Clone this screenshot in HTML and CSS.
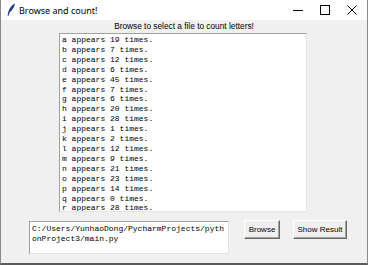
FILE: index.html
```html
<!DOCTYPE html>
<html>
<head>
  <title>Browse and count!</title>
  <link rel="stylesheet" href="styles.css">
</head>
<body>
  <div class="window">
    <div class="titlebar">
      <svg class="app-icon" width="10" height="14" viewBox="0 0 10 14">
        <path d="M8.5 0.5 C6 2 3.5 5 2.2 9 L1.6 12.8 L2.4 13 L3.6 9.6 C6.2 7 8.4 4 8.8 1.2 Z" fill="#1f3b73"/>
      </svg>
      <span class="title">Browse and count!</span>
      <div class="controls">
        <svg width="10" height="10" viewBox="0 0 10 10"><path d="M0 5.5 H10" stroke="#000" stroke-width="1"/></svg>
        <svg width="10" height="10" viewBox="0 0 10 10"><rect x="0.5" y="0.5" width="9" height="9" fill="none" stroke="#000" stroke-width="1"/></svg>
        <svg width="10" height="10" viewBox="0 0 10 10"><path d="M0.5 0.5 L9.5 9.5 M9.5 0.5 L0.5 9.5" stroke="#000" stroke-width="1"/></svg>
      </div>
    </div>

    <div class="content">
      <div class="label">Browse to select a file to count letters!</div>
      <div class="textbox">a appears 19 times.
b appears 7 times.
c appears 12 times.
d appears 6 times.
e appears 45 times.
f appears 7 times.
g appears 6 times.
h appears 20 times.
i appears 28 times.
j appears 1 times.
k appears 2 times.
l appears 12 times.
m appears 9 times.
n appears 21 times.
o appears 23 times.
p appears 14 times.
q appears 0 times.
r appears 28 times.</div>

      <div class="bottom-row">
        <div class="path-box">C:/Users/YunhaoDong/PycharmProjects/pythonProject3/main.py</div>
        <button class="btn btn-browse">Browse</button>
        <button class="btn btn-show">Show Result</button>
      </div>
    </div>
  </div>
</body>
</html>
```

FILE: styles.css
```css
body {
  margin: 0;
  padding: 0;
  font-family: 'Liberation Sans', Arial, sans-serif;
  background: #f0f0f0;
}

.window {
  width: 368px;
  height: 265px;
  box-sizing: border-box;
  border: 1px solid #8a8a8a;
  border-top: none;
  border-bottom: 2px solid #5a5a5a;
  background: #f0f0f0;
  display: flex;
  flex-direction: column;
  overflow: hidden;
}

.titlebar {
  height: 20px;
  background: #ffffff;
  display: flex;
  align-items: center;
  padding-left: 5px;
}

.app-icon {
  margin-right: 3px;
}

.title {
  font-family: 'Noto Sans', sans-serif;
  font-size: 9px;
  color: #000;
}

.controls {
  margin-left: auto;
  display: flex;
  gap: 17px;
  padding-right: 10px;
}

.content {
  flex: 1;
  display: flex;
  flex-direction: column;
}

.label {
  font-size: 8.3px;
  text-align: center;
  color: #000;
  height: 13px;
  line-height: 13px;
}

.textbox {
  margin-left: 58px;
  width: 248px;
  height: 179px;
  box-sizing: border-box;
  background: #fff;
  border: 1px solid #e3e3e3;
  border-top-color: #a0a0a0;
  border-left-color: #a0a0a0;
  font-family: 'Liberation Mono', monospace;
  font-size: 8px;
  line-height: 9.9px;
  white-space: pre;
  padding: 1px 2px;
  color: #000;
  overflow: hidden;
}

.bottom-row {
  display: flex;
  align-items: flex-start;
  margin-top: 9px;
  padding-left: 28px;
}

.path-box {
  width: 200px;
  height: 33px;
  box-sizing: border-box;
  background: #fff;
  border: 1px solid #e3e3e3;
  border-top-color: #a0a0a0;
  border-left-color: #a0a0a0;
  font-family: 'Liberation Mono', monospace;
  font-size: 8px;
  line-height: 10px;
  padding: 2px 2px;
  word-break: break-all;
  color: #000;
}

.btn {
  font-family: 'Liberation Sans', Arial, sans-serif;
  font-size: 8px;
  height: 19px;
  padding: 0;
  background: #f0f0f0;
  color: #000;
  border: 1px solid;
  border-color: #ffffff #696969 #696969 #ffffff;
  box-shadow: inset -1px -1px 0 #a0a0a0;
  margin-top: -1px;
}

.btn-browse {
  width: 36px;
  margin-left: 15px;
}

.btn-show {
  width: 54px;
  margin-left: 13px;
}
```
